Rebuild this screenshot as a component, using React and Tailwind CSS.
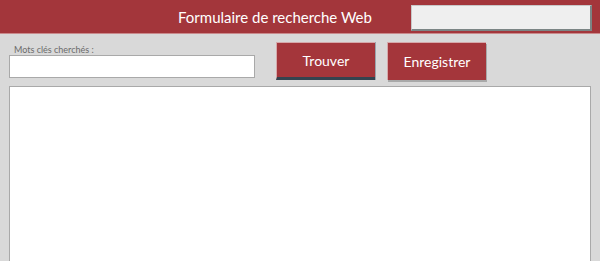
import React from 'react';

export default function App() {
  return (
    <div className="w-[600px] h-[261px] overflow-hidden bg-[#d9d9d9] font-['Lato','Open_Sans',sans-serif]">
      {/* Header */}
      <div className="h-[34px] bg-[#a3363b] border-b border-[#c98a8c] flex items-center">
        <h1 className="ml-[178px] text-white text-[15px] leading-none w-[233px] pt-[2px]">Formulaire de recherche Web</h1>
        <div className="mt-[2px] w-[181px] h-[26px] bg-[#efefef] border border-[#c8c8c8] border-r-2 border-b-2 border-r-[#7b8585] border-b-[#7b8585]"></div>
      </div>

      {/* Search row */}
      <div className="flex h-[52px]">
        <div className="ml-[9px] w-[246px]">
          <div className="mt-[10px] ml-[5px] text-[9px] leading-[11px] text-[#6b6b6b]">Mots clés cherchés :</div>
          <div className="h-[23px] bg-white border border-[#a9a9a9]"></div>
        </div>
        <button className="ml-[21px] mt-[8px] w-[99px] h-[38px] bg-[#a4363b] text-white text-[14px] border-l border-t border-[#d6a9ab] border-b-[3px] border-b-[#34434f] shadow-[1px_0_0_#9aa5ad]">
          Trouver
        </button>
        <button className="ml-[12px] mt-[8px] w-[99px] h-[38px] bg-[#a4363b] text-white text-[14px] border-l border-t border-[#d6a9ab] shadow-[1px_2px_0_#a9a9a9]">
          Enregistrer
        </button>
      </div>

      {/* Results area */}
      <div className="ml-[9px] w-[582px] h-[200px] bg-white border border-[#a9a9a9]"></div>
    </div>
  );
}
